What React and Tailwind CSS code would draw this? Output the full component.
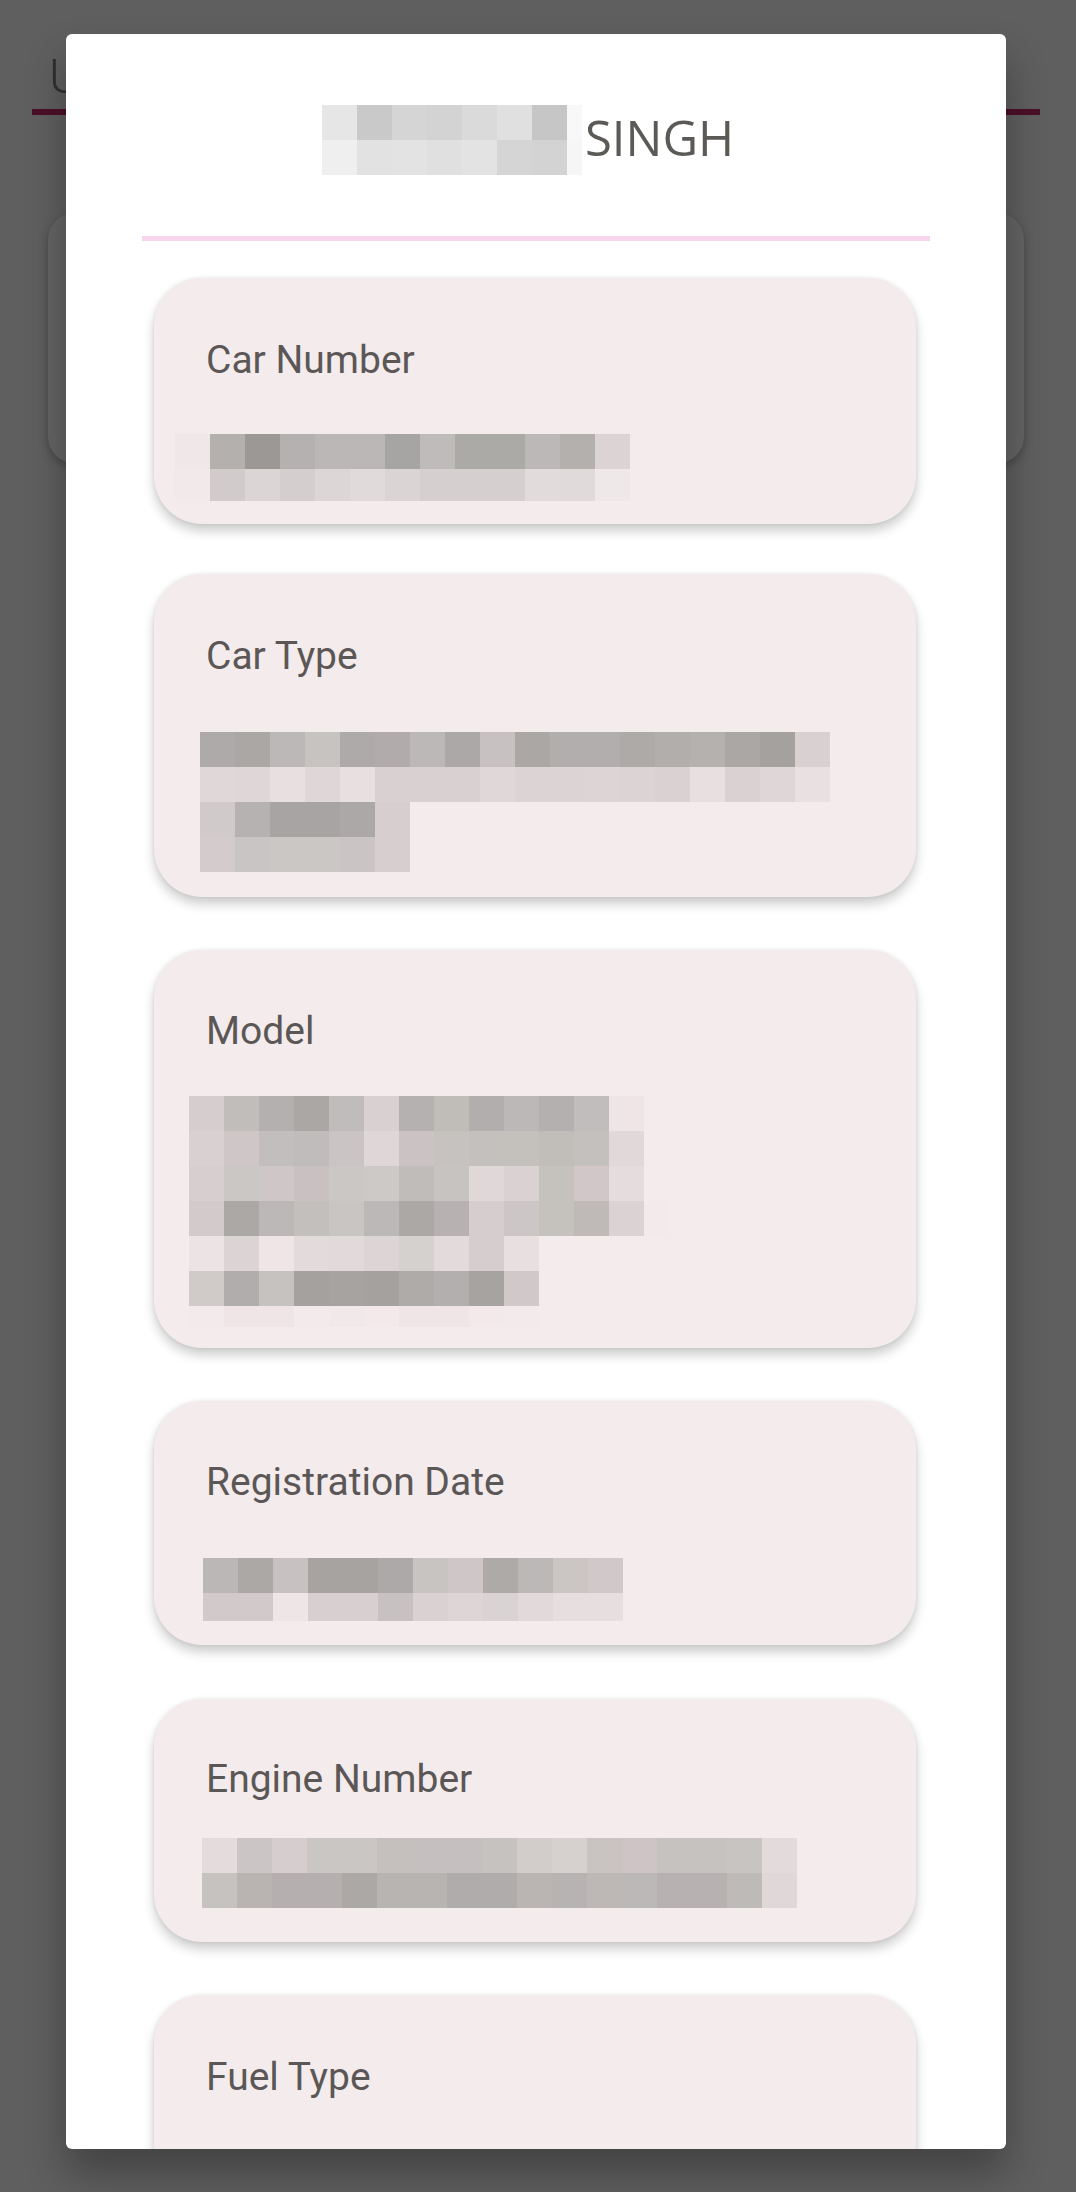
import React from "react";

// pixelated (redacted) values, one entry per mosaic row
const TITLE_MOSAIC = [
  { h: 35, last: 15, cells: ["#e6e6e6", "#c9c9c9", "#d5d5d5", "#d3d3d3", "#dadada", "#e0e0e0", "#c6c6c6", "#f8f8f8"] },
  { h: 35, last: 15, cells: ["#efefef", "#e2e2e2", "#e3e3e3", "#e0e0e0", "#e3e3e3", "#d5d5d5", "#d3d3d3", "#f6f6f6"] },
];

const FIELDS = [
  {
    label: "Car Number",
    card: "mt-[37px] pt-[60px] pb-[23px]",
    value: "mt-[52px] ml-[21px]",
    rows: [
      { h: 35, cells: ["#efe7e8", "#b3b0ad", "#9b9896", "#b5b1b1", "#bbb7b7", "#bbb7b7", "#a7a5a3", "#bfbbbb", "#acaaa7", "#acaaa7", "#bcb8b8", "#b4b0ae", "#dbd3d4"] },
      { h: 32, cells: ["#f1e9ea", "#d1cbcb", "#dcd5d5", "#d5cecf", "#dcd6d6", "#e0dada", "#dad4d4", "#d6cfcf", "#d6cfcf", "#d6cfcf", "#e1dbdc", "#e0dadb", "#efe8e9"] },
    ],
  },
  {
    label: "Car Type",
    card: "mt-[50px] pt-[60px] pb-[25px]",
    value: "mt-[54px] ml-[46px]",
    rows: [
      { h: 35, cells: ["#afaaaa", "#aba7a5", "#bcb8b8", "#c6c3c1", "#afaaaa", "#b1abac", "#bcb8b8", "#aca8a7", "#c7c1c2", "#aaa7a4", "#b3aeae", "#b3aeae", "#aeaaa8", "#b2aeab", "#b5b1ae", "#aaa7a4", "#a4a19f", "#d9d0d1"] },
      { h: 35, cells: ["#e0d7d8", "#dfd6d7", "#e8dfe0", "#dfd6d7", "#e8dfe0", "#d8d0d1", "#d8d0d1", "#d8d0d1", "#e0d7d8", "#dbd3d4", "#dbd3d4", "#dcd4d5", "#dbd3d4", "#d9d1d2", "#e8dfe0", "#d9d1d2", "#dfd6d7", "#e9e0e1"] },
      { h: 35, cells: ["#d0cbca", "#b6b2b2", "#a7a4a3", "#a7a4a3", "#aca8a7", "#d7cecf"] },
      { h: 35, cells: ["#d4cbcc", "#c9c5c4", "#cbc7c5", "#cbc7c5", "#cbc4c5", "#d7cecf"] },
    ],
  },
  {
    label: "Model",
    card: "mt-[53px] pt-[59px] pb-[21px]",
    value: "mt-[43px] ml-[35px]",
    rows: [
      { h: 35, cells: ["#d5cdce", "#c1bdbb", "#b5b0b0", "#aaa7a4", "#c1bcbc", "#d9d0d1", "#b6b1b1", "#c0bcb8", "#b3aeae", "#bcb8b8", "#b4b0b0", "#c1bdbc", "#efe5e6"] },
      { h: 35, cells: ["#d8d0d1", "#cfc6c7", "#c2bebd", "#c0bcbb", "#cac4c4", "#dfd6d7", "#cbc2c3", "#c6c2bf", "#c4c0bd", "#c4c0bc", "#c1bdb9", "#c4c0bd", "#e1d8d9"] },
      { h: 35, last: 25, cells: ["#d6cecf", "#cac7c4", "#cfc7c7", "#c9c1c1", "#cbc7c5", "#cdc9c7", "#c0bcba", "#c7c3c0", "#e0d7d8", "#dad1d2", "#c5c1bd", "#d1c7c8", "#e5dcdd", "#f3ebec"] },
      { h: 35, last: 25, cells: ["#d2cacb", "#aba8a6", "#bdb8b8", "#c3bfbd", "#c9c5c3", "#bdb8b8", "#aba8a6", "#b7b1b1", "#d6cdce", "#ccc7c6", "#c5c1bd", "#bfbab8", "#dbd2d3", "#f3eaeb"] },
      { h: 35, cells: ["#ece3e4", "#dcd3d4", "#efe5e6", "#e3dadb", "#e2d9da", "#ddd4d5", "#d5d1ce", "#e3dadb", "#d6cdce", "#e8dfe0"] },
      { h: 35, cells: ["#d0cbc9", "#b2adad", "#c6c2bf", "#a4a19e", "#a6a3a1", "#a4a19e", "#afaba9", "#b4afaf", "#a6a3a1", "#d1c8c9"] },
      { h: 21, cells: ["#f2eaeb", "#efe5e6", "#efe5e6", "#f3eaeb", "#f1e8e9", "#f3e9ea", "#efe5e6", "#efe5e6", "#f3e9ea", "#f3eaeb"] },
    ],
  },
  {
    label: "Registration Date",
    card: "mt-[53px] pt-[59px] pb-[24px]",
    value: "mt-[54px] ml-[49px]",
    rows: [
      { h: 35, cells: ["#bcb7b7", "#aca8a6", "#c8c1c2", "#a7a3a1", "#a7a3a1", "#ada9a8", "#c8c4c2", "#cec6c7", "#aeaaa8", "#bcb8b7", "#cbc6c4", "#d0c8c9"] },
      { h: 28, cells: ["#d2caca", "#d2caca", "#eee5e6", "#d7cfd0", "#d7cfd0", "#c7c2c1", "#d9d1d2", "#ddd5d6", "#d9d4d3", "#e1d9da", "#e6dedf", "#e6dedf"] },
    ],
  },
  {
    label: "Engine Number",
    card: "mt-[54px] pt-[58px] pb-[34px]",
    value: "mt-[37px] ml-[48px]",
    rows: [
      { h: 35, cells: ["#e4dbdc", "#cbc6c5", "#d6cdce", "#cac6c3", "#cac6c3", "#c5c0be", "#c5c0bf", "#c5c0bf", "#c6c2bf", "#d2cdca", "#d6d1ce", "#c9c4c1", "#cec4c5", "#c6c2bf", "#c6c2bf", "#c8c4c1", "#e3dadb"] },
      { h: 35, cells: ["#c6c2bf", "#b9b4b2", "#b5b0af", "#b5b0af", "#aba8a5", "#b8b4b2", "#b8b4b2", "#b1acac", "#b1acac", "#bab5b3", "#b8b3b3", "#bdb8b6", "#bdb8b8", "#b7b1b1", "#b7b1b1", "#bebab8", "#e0d7d8"] },
    ],
  },
  {
    label: "Fuel Type",
    card: "mt-[53px] pt-[60px] pb-[120px]",
    value: "mt-[40px] ml-[48px]",
    rows: [],
  },
];

function Mosaic({ rows, className = "" }) {
  return (
    <div className={`flex flex-col ${className}`}>
      {rows.map((row, i) => (
        <div key={i} className="flex">
          {row.cells.map((c, j) => (
            <div
              key={j}
              style={{
                backgroundColor: c,
                height: row.h,
                width: row.last && j === row.cells.length - 1 ? row.last : 35,
              }}
            />
          ))}
        </div>
      ))}
    </div>
  );
}

function FieldCard({ field }) {
  return (
    <div
      className={`w-[762px] shrink-0 rounded-[48px] bg-[#f4ecec] shadow-[0_7px_12px_rgba(0,0,0,0.2),0_0_4px_rgba(0,0,0,0.08)] ${field.card}`}
    >
      <p className="ml-[52px] text-[39px] leading-[44px] text-[#5c5757] font-['Roboto',sans-serif]">
        {field.label}
      </p>
      {field.rows.length > 0 && <Mosaic rows={field.rows} className={field.value} />}
    </div>
  );
}

export default function App() {
  return (
    <div className="relative h-[2192px] w-[1076px] overflow-hidden bg-[#5f5f5f] font-['Roboto',sans-serif]">
      {/* page underneath the dialog, dimmed by the backdrop */}
      <div className="flex flex-col">
        <div className="pl-[49px] pt-[52px] text-[49px] font-light leading-[50px] text-[#303030]">U</div>
        <div className="ml-[32px] mt-[7px] h-[6px] w-[1008px] bg-[#4b0f2a]" />
        <div className="ml-[48px] mt-[97px] h-[252px] w-[976px] rounded-[28px] bg-[#646464] shadow-[0_4px_10px_rgba(0,0,0,0.25)]" />
      </div>

      {/* dialog */}
      <div className="absolute left-[66px] top-[34px] flex h-[2115px] w-[940px] flex-col overflow-hidden rounded-[6px] bg-white pt-[67px] shadow-[0_24px_40px_rgba(0,0,0,0.3)]">
        <div className="flex items-start pl-[256px]">
          <Mosaic rows={TITLE_MOSAIC} className="mt-[4px]" />
          <h2 className="ml-[3px] mt-[1px] font-['Open_Sans',sans-serif] text-[49px] leading-[71px] text-[#5b5a56]">
            SINGH
          </h2>
        </div>

        <div className="ml-[76px] mt-[61px] h-[5px] w-[788px] shrink-0 bg-[#f8d5ef]" />

        <div className="flex flex-col pl-[88px]">
          {FIELDS.map((f) => (
            <FieldCard key={f.label} field={f} />
          ))}
        </div>
      </div>
    </div>
  );
}
